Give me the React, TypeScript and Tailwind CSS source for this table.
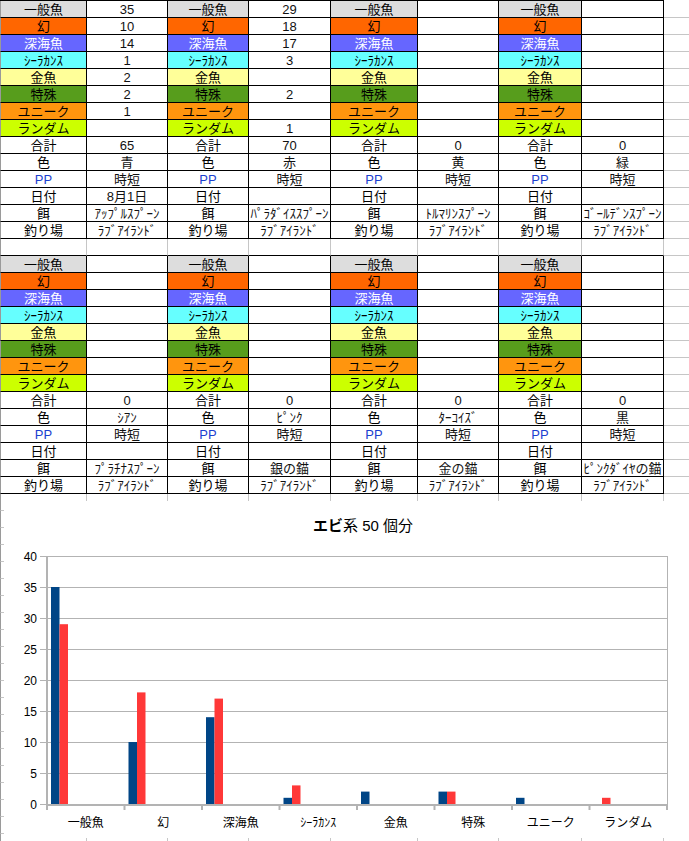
import React from "react";

const FONT = "font-['Liberation_Sans','Noto_Sans_CJK_JP',sans-serif]";
const COLS = "grid grid-cols-[87px_81px_81px_82px_87px_81px_83px_82px_25px]";

const labels = [
  { text: "一般魚", cls: "bg-[#dddddd]" },
  { text: "幻", cls: "bg-[#ff6600]" },
  { text: "深海魚", cls: "bg-[#6666ff] text-white" },
  { text: "ｼｰﾗｶﾝｽ", cls: "bg-[#66ffff]" },
  { text: "金魚", cls: "bg-[#ffff99]" },
  { text: "特殊", cls: "bg-[#579d1c]" },
  { text: "ユニーク", cls: "bg-[#ff950e]" },
  { text: "ランダム", cls: "bg-[#ccff00]" },
  { text: "合計", cls: "bg-white" },
  { text: "色", cls: "bg-white" },
  { text: "PP", cls: "bg-white text-[#1b3fd0]" },
  { text: "日付", cls: "bg-white" },
  { text: "餌", cls: "bg-white" },
  { text: "釣り場", cls: "bg-white" },
];

const blank8 = ["", "", "", "", "", "", "", ""];

const block1 = [
  ["35", "10", "14", "1", "2", "2", "1", "", "65", "青", "時短", "8月1日", "ｱｯﾌﾟﾙｽﾌﾟｰﾝ", "ﾗﾌﾞｱｲﾗﾝﾄﾞ"],
  ["29", "18", "17", "3", "", "2", "", "1", "70", "赤", "時短", "", "ﾊﾟﾗﾀﾞｲｽｽﾌﾟｰﾝ", "ﾗﾌﾞｱｲﾗﾝﾄﾞ"],
  [...blank8, "0", "黄", "時短", "", "ﾄﾙﾏﾘﾝｽﾌﾟｰﾝ", "ﾗﾌﾞｱｲﾗﾝﾄﾞ"],
  [...blank8, "0", "緑", "時短", "", "ｺﾞｰﾙﾃﾞﾝｽﾌﾟｰﾝ", "ﾗﾌﾞｱｲﾗﾝﾄﾞ"],
];

const block2 = [
  [...blank8, "0", "ｼｱﾝ", "時短", "", "ﾌﾟﾗﾁﾅｽﾌﾟｰﾝ", "ﾗﾌﾞｱｲﾗﾝﾄﾞ"],
  [...blank8, "0", "ﾋﾟﾝｸ", "時短", "", "銀の錨", "ﾗﾌﾞｱｲﾗﾝﾄﾞ"],
  [...blank8, "0", "ﾀｰｺｲｽﾞ", "時短", "", "金の錨", "ﾗﾌﾞｱｲﾗﾝﾄﾞ"],
  [...blank8, "0", "黒", "時短", "", "ﾋﾟﾝｸﾀﾞｲﾔの錨", "ﾗﾌﾞｱｲﾗﾝﾄﾞ"],
];

const cell = "flex h-[17px] items-center justify-center overflow-hidden whitespace-nowrap text-[13px] leading-none border-b border-r";

function Block({ values }: { values: string[][] }) {
  return (
    <>
      {labels.map((lab, r) => (
        <div key={r} className={COLS}>
          {values.map((col, g) => (
            <React.Fragment key={g}>
              <div className={`${cell} border-black ${lab.cls} ${g === 0 ? "border-l border-l-[#9a9a9a]" : ""}`}>{lab.text}</div>
              <div className={`${cell} border-black bg-white text-[#111]`}>{col[r]}</div>
            </React.Fragment>
          ))}
          <div className="h-[17px] border-b border-[#c6c6c6]" />
        </div>
      ))}
    </>
  );
}

function EmptyRow({ dark }: { dark?: boolean }) {
  return (
    <div className={COLS}>
      {Array.from({ length: 8 }).map((_, i) => (
        <div
          key={i}
          className={`h-[17px] border-b border-r border-r-[#c6c6c6] ${dark ? "border-b-black" : "border-b-[#c6c6c6]"} ${i === 0 ? "border-l border-l-[#9a9a9a]" : ""}`}
        />
      ))}
      <div className="h-[17px] border-b border-[#c6c6c6]" />
    </div>
  );
}

const cats = ["一般魚", "幻", "深海魚", "ｼｰﾗｶﾝｽ", "金魚", "特殊", "ユニーク", "ランダム"];
const s1 = [35, 10, 14, 1, 2, 2, 1, 0];
const s2 = [29, 18, 17, 3, 0, 2, 0, 1];

function Chart() {
  const x0 = 47;
  const x1 = 667;
  const y0 = 804;
  const step = 77.5;
  const unit = 6.2;
  const grid = [0, 5, 10, 15, 20, 25, 30, 35, 40];
  return (
    <div className="flex h-[337px] w-[718px] flex-col bg-white">
      <div className="pt-[16px] text-center text-[15px] leading-[18px] text-black">
        <span className="font-bold">エビ</span>系 50 個分
      </div>
      <svg width={718} height={303} viewBox="4 535 718 303" className="block">
        {grid.map((v) => {
          const y = y0 - v * unit + 0.5;
          return <line key={v} x1={40} x2={x1} y1={y} y2={y} stroke="#b3b3b3" strokeWidth={1} />;
        })}
        <line x1={x1 + 0.5} x2={x1 + 0.5} y1={556} y2={810} stroke="#b3b3b3" strokeWidth={1} />
        {cats.map((c, i) => {
          const cx = x0 + step * i;
          const h1 = s1[i] * unit;
          const h2 = s2[i] * unit;
          return (
            <g key={c}>
              {h1 > 0 && <rect x={cx + 4} y={y0 - h1} width={8.5} height={h1} fill="#004586" />}
              {h2 > 0 && <rect x={cx + 12.5} y={y0 - h2} width={8.5} height={h2} fill="#ff3838" />}
            </g>
          );
        })}
        <rect x={46} y={556} width={2} height={250} fill="#b3b3b3" />
        <rect x={46} y={804} width={622} height={2} fill="#b3b3b3" />
        {Array.from({ length: 9 }).map((_, i) => (
          <rect key={i} x={x0 + step * i - 1} y={804} width={2} height={6} fill="#b3b3b3" />
        ))}
        {grid.map((v) => (
          <text key={v} x={37} y={y0 - v * unit + 1} textAnchor="end" dominantBaseline="central" fontSize={12} fill="#000" fontFamily="'Liberation Sans', sans-serif">
            {v}
          </text>
        ))}
        {cats.map((c, i) => (
          <text key={c} x={x0 + step * i + step / 2} y={821.5} textAnchor="middle" dominantBaseline="central" fontSize={12} fill="#000" fontFamily="'Noto Sans CJK JP', sans-serif">
            {c}
          </text>
        ))}
      </svg>
    </div>
  );
}

export default function App() {
  return (
    <div className={`relative h-[841px] w-[689px] overflow-hidden bg-white text-black ${FONT}`}>
      <div className="h-px w-[664px] bg-black" />
      <Block values={block1} />
      <EmptyRow dark />
      <Block values={block2} />
      {Array.from({ length: 21 }).map((_, i) => (
        <EmptyRow key={i} />
      ))}
      <div className="absolute left-[4px] top-[501px]">
        <Chart />
      </div>
    </div>
  );
}
